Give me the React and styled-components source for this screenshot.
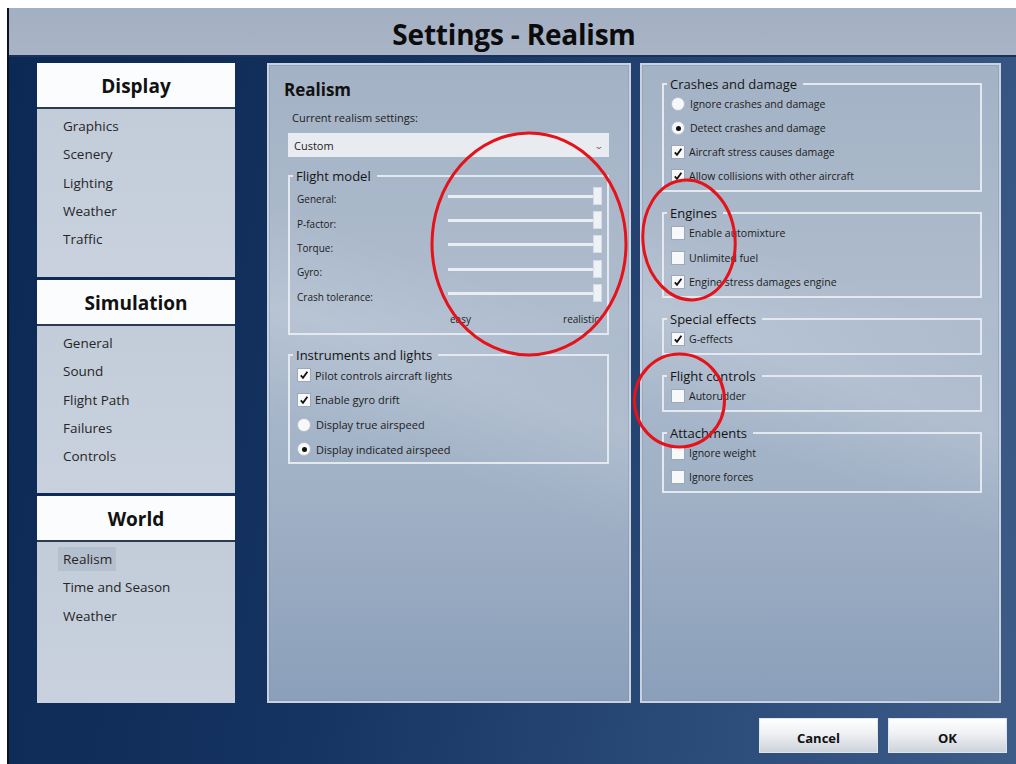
import React from 'react';
import styled, { createGlobalStyle } from 'styled-components';

const GlobalStyle = createGlobalStyle`
  html, body {
    margin: 0;
    padding: 0;
    background: #ffffff;
  }
  body {
    font-family: "Open Sans", "Liberation Sans", sans-serif;
  }
`;

const FONT = `"Open Sans", "Liberation Sans", sans-serif`;

const Page = styled.div`
  position: relative;
  width: 1016px;
  height: 764px;
  padding: 8px 0 0 7px;
  box-sizing: border-box;
  background: #ffffff;
  overflow: hidden;
`;

const Window = styled.div`
  display: flex;
  flex-direction: column;
  height: 756px;
  border-left: 2px solid #0a1224;
  box-sizing: border-box;
`;

const TitleBar = styled.div`
  height: 47px;
  flex: none;
  display: flex;
  align-items: center;
  justify-content: center;
  background: linear-gradient(180deg, #a3afc2 0%, #a9b4c6 100%);
  border-bottom: 2px solid #1a3158;
`;

const Title = styled.h1`
  margin: 4px 0 0 3px;
  font-family: ${FONT};
  font-weight: 700;
  font-size: 28px;
  letter-spacing: -0.2px;
  color: #0c0c0c;
`;

const Body = styled.div`
  flex: 1;
  display: flex;
  flex-direction: column;
  padding: 6px 9px 0 28px;
  background: linear-gradient(100deg, #0c2855 0%, #153360 35%, #2a4a78 70%, #3d5c88 100%);
`;

const Columns = styled.div`
  display: flex;
  height: 640px;
`;

const Sidebar = styled.nav`
  width: 198px;
  display: flex;
  flex-direction: column;
  gap: 3px;
  margin-right: 32px;
`;

const Section = styled.div`
  display: flex;
  flex-direction: column;
  flex: ${p => (p.$grow ? 1 : 'none')};
`;

const SectionHeader = styled.div`
  height: 46px;
  flex: none;
  display: flex;
  align-items: center;
  justify-content: center;
  padding-top: 2px;
  box-sizing: border-box;
  background: #fbfcfd;
  border-bottom: 2px solid #2d3b52;
  font-family: ${FONT};
  font-weight: 700;
  font-size: 19px;
  color: #111;
`;

const SectionList = styled.ul`
  list-style: none;
  margin: 0;
  padding: 3px 0 0 21px;
  height: ${p => p.$height}px;
  box-sizing: border-box;
  background: linear-gradient(180deg, #c3cdda 0%, #c8d1dd 100%);
  flex: ${p => (p.$grow ? 1 : 'none')};
`;

const NavItem = styled.li`
  display: flex;
  align-items: center;
  height: 28.3px;
  span {
    padding: 0 4px 0 5px;
    line-height: 24px;
    font-family: ${FONT};
    font-size: 13.5px;
    color: #262626;
    background: ${p => (p.$active ? '#b5c0ce' : 'transparent')};
  }
`;

const Panel = styled.section`
  width: ${p => p.$width}px;
  margin-left: ${p => p.$gap}px;
  box-sizing: border-box;
  border: 2px solid #c9d2de;
  box-shadow: inset 0 0 0 1px rgba(120, 140, 170, 0.35);
  padding: ${p => p.$pad};
  display: flex;
  flex-direction: column;
  background:
    linear-gradient(200deg, rgba(255, 255, 255, 0) 35%, rgba(255, 255, 255, 0.12) 48%, rgba(255, 255, 255, 0) 62%),
    linear-gradient(180deg, #a4b2c5 0%, #aebcce 40%, #9cadc3 75%, #8a9fba 100%);
`;

const PanelTitle = styled.h2`
  margin: 5px 0 0 0;
  font-family: ${FONT};
  font-weight: 700;
  font-size: 17px;
  color: #111;
`;

const SmallLabel = styled.div`
  margin: 9px 0 0 8px;
  font-family: ${FONT};
  font-size: 11px;
  color: #1c1c1c;
`;

const Select = styled.div`
  margin: 8px 0 0 4px;
  height: 24px;
  display: flex;
  align-items: center;
  justify-content: space-between;
  padding: 0 6px;
  background: #e8ecf1;
  font-family: ${FONT};
  font-size: 11px;
  color: #222;
`;

const Chevron = styled.span`
  font-size: 9px;
  color: #666;
  transform: scaleX(1.3);
`;

const Group = styled.fieldset`
  margin: ${p => p.$top}px 0 0 ${p => p.$left}px;
  padding: 0 8px ${p => p.$bottom}px 8px;
  border: 2px solid #e4e9ef;
  min-width: 0;
`;

const Legend = styled.legend`
  margin-left: -5px;
  padding: 0 6px 0 3px;
  font-family: ${FONT};
  font-size: 13px;
  line-height: 16px;
  color: #151515;
`;

const OptionRow = styled.div`
  height: ${p => p.$h || 24}px;
  display: flex;
  align-items: center;
  gap: 4px;
  margin-left: -1px;
  font-family: ${FONT};
  font-size: ${p => p.$size || 10.5}px;
  color: #1c1c1c;
`;

const Box = styled.span`
  width: 12px;
  height: 12px;
  flex: none;
  display: flex;
  align-items: center;
  justify-content: center;
  background: #f7f8fa;
  border: 1px solid #9ea8b6;
`;

const Radio = styled.span`
  width: 12px;
  height: 12px;
  flex: none;
  border-radius: 50%;
  display: flex;
  align-items: center;
  justify-content: center;
  background: #f7f8fa;
  border: 1px solid #b5bdc8;
  margin-right: 1px;
  &::after {
    content: '';
    width: 5px;
    height: 5px;
    border-radius: 50%;
    background: ${p => (p.$on ? '#111' : 'transparent')};
  }
`;

const Check = ({ on }) => (
  <Box>
    {on && (
      <svg width="10" height="10" viewBox="0 0 10 10">
        <path d="M1.8 5.4 L4 7.8 L8.4 1.8" fill="none" stroke="#111" strokeWidth="1.8" />
      </svg>
    )}
  </Box>
);

const Option = ({ type, on, label, size, h }) => (
  <OptionRow $size={size} $h={h}>
    {type === 'radio' ? <Radio $on={on} /> : <Check on={on} />}
    <span>{label}</span>
  </OptionRow>
);

const SliderRow = styled.div`
  height: 24.4px;
  display: flex;
  align-items: center;
  font-family: ${FONT};
  font-size: 10px;
  color: #1c1c1c;
`;

const SliderLabel = styled.span`
  width: 151px;
  flex: none;
  padding-top: 6px;
  margin-left: -1px;
`;

const Track = styled.div`
  position: relative;
  flex: 1;
  height: 3px;
  margin-right: 2px;
  background: #e9eef4;
`;

const Thumb = styled.span`
  position: absolute;
  top: -8px;
  width: 9px;
  height: 18px;
  background: #eef1f5;
  border: 1px solid #d5dce6;
  box-sizing: border-box;
`;

const Scale = styled.div`
  height: 23px;
  display: flex;
  justify-content: space-between;
  align-items: center;
  padding: 2px 0 0 152px;
  font-family: ${FONT};
  font-size: 10px;
  color: #1c1c1c;
`;

const Footer = styled.div`
  display: flex;
  justify-content: flex-end;
  gap: 10px;
  padding-top: 15px;
`;

const Button = styled.button`
  width: 119px;
  height: 35px;
  border: 1px solid #dfe4ea;
  background: linear-gradient(180deg, #ffffff 0%, #eef0f3 45%, #cdd3db 100%);
  font-family: ${FONT};
  font-weight: 700;
  font-size: 13px;
  color: #111;
  padding: 4px 0 0 0;
`;

const Marks = styled.svg`
  position: absolute;
  left: 0;
  top: 0;
  pointer-events: none;
`;

const nav = [
  { title: 'Display', height: 168, items: ['Graphics', 'Scenery', 'Lighting', 'Weather', 'Traffic'] },
  { title: 'Simulation', height: 167, items: ['General', 'Sound', 'Flight Path', 'Failures', 'Controls'] },
  { title: 'World', grow: true, items: ['Realism', 'Time and Season', 'Weather'] },
];

const sliders = [
  { label: 'General:', value: 1 },
  { label: 'P-factor:', value: 1 },
  { label: 'Torque:', value: 1 },
  { label: 'Gyro:', value: 1 },
  { label: 'Crash tolerance:', value: 1 },
];

const groups = [
  {
    title: 'Crashes and damage',
    options: [
      { type: 'radio', on: false, label: 'Ignore crashes and damage' },
      { type: 'radio', on: true, label: 'Detect crashes and damage' },
      { type: 'check', on: true, label: 'Aircraft stress causes damage' },
      { type: 'check', on: true, label: 'Allow collisions with other aircraft' },
    ],
  },
  {
    title: 'Engines',
    options: [
      { type: 'check', on: false, label: 'Enable automixture' },
      { type: 'check', on: false, label: 'Unlimited fuel' },
      { type: 'check', on: true, label: 'Engine stress damages engine' },
    ],
  },
  { title: 'Special effects', options: [{ type: 'check', on: true, label: 'G-effects' }] },
  { title: 'Flight controls', options: [{ type: 'check', on: false, label: 'Autorudder' }] },
  {
    title: 'Attachments',
    options: [
      { type: 'check', on: false, label: 'Ignore weight' },
      { type: 'check', on: false, label: 'Ignore forces' },
    ],
  },
];

export default function App() {
  return (
    <>
      <GlobalStyle />
      <Page>
        <Window>
          <TitleBar>
            <Title>Settings - Realism</Title>
          </TitleBar>
          <Body>
            <Columns>
              <Sidebar>
                {nav.map(section => (
                  <Section key={section.title} $grow={section.grow}>
                    <SectionHeader>{section.title}</SectionHeader>
                    <SectionList $height={section.height} $grow={section.grow}>
                      {section.items.map(item => (
                        <NavItem key={item} $active={section.title === 'World' && item === 'Realism'}>
                          <span>{item}</span>
                        </NavItem>
                      ))}
                    </SectionList>
                  </Section>
                ))}
              </Sidebar>

              <Panel $width={364} $gap={0} $pad="8px 20px 0 15px">
                <PanelTitle>Realism</PanelTitle>
                <SmallLabel>Current realism settings:</SmallLabel>
                <Select>
                  <span>Custom</span>
                  <Chevron>⌄</Chevron>
                </Select>

                <Group $top={11} $left={4} $bottom={2}>
                  <Legend>Flight model</Legend>
                  {sliders.map(s => (
                    <SliderRow key={s.label}>
                      <SliderLabel>{s.label}</SliderLabel>
                      <Track>
                        <Thumb style={{ left: `calc(${s.value * 100}% - 4px)` }} />
                      </Track>
                    </SliderRow>
                  ))}
                  <Scale>
                    <span>easy</span>
                    <span>realistic</span>
                  </Scale>
                </Group>

                <Group $top={12} $left={4} $bottom={0}>
                  <Legend>Instruments and lights</Legend>
                  <Option type="check" on label="Pilot controls aircraft lights" size={11} h={24.7} />
                  <Option type="check" on label="Enable gyro drift" size={11} h={24.7} />
                  <Option type="radio" on={false} label="Display true airspeed" size={11} h={24.7} />
                  <Option type="radio" on label="Display indicated airspeed" size={11} h={24.7} />
                </Group>
              </Panel>

              <Panel $width={361} $gap={9} $pad="11px 17px 0 20px">
                {groups.map((g, i) => (
                  <Group key={g.title} $top={i === 0 ? 0 : 13} $left={0} $bottom={2}>
                    <Legend>{g.title}</Legend>
                    {g.options.map(o => (
                      <Option key={o.label} {...o} h={24.1} />
                    ))}
                  </Group>
                ))}
              </Panel>
            </Columns>

            <Footer>
              <Button>Cancel</Button>
              <Button>OK</Button>
            </Footer>
          </Body>
        </Window>

        <Marks width="1016" height="764" viewBox="0 0 1016 764">
          <g fill="none" stroke="#e5121a" strokeWidth="3">
            <ellipse cx="529" cy="244" rx="97" ry="111" />
            <ellipse cx="689" cy="240" rx="46" ry="60" transform="rotate(-6 689 240)" />
            <ellipse cx="679.5" cy="400.5" rx="45" ry="46.5" />
          </g>
        </Marks>
      </Page>
    </>
  );
}
